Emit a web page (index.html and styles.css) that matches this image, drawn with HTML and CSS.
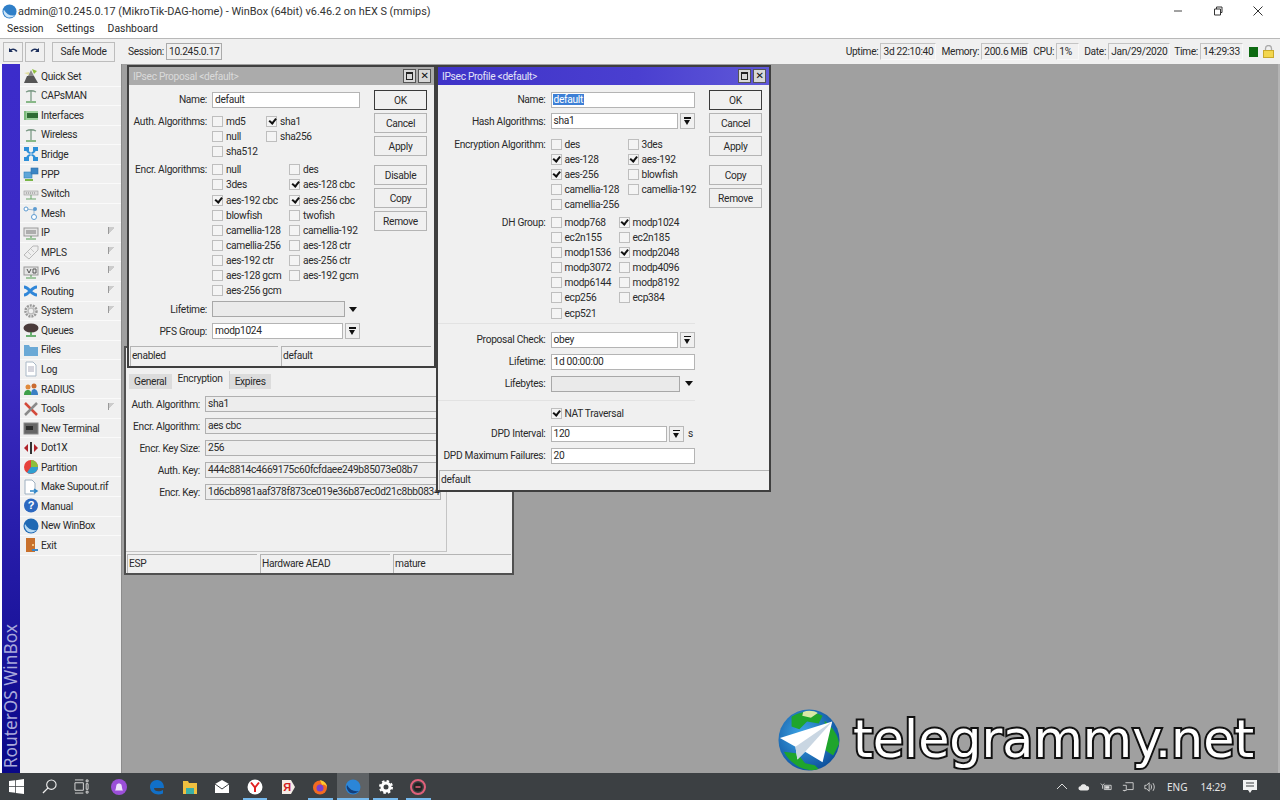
FILE: index.html
```html
<!DOCTYPE html>
<html>
<head>
    <title>WinBox</title>
    <link rel="stylesheet" href="styles.css">
</head>
<body>
<div class="app">

    <div class="titlebar">
        <svg class="app-icon" viewBox="0 0 16 16"><circle cx="8" cy="8" r="7.5" fill="#2f7fc8"/><path d="M2 6c3 5 7 7 12 6-3 3-8 3-10 1S1 8 2 6z" fill="#cfe6f8"/></svg>
        <span class="title-text">admin@10.245.0.17 (MikroTik-DAG-home) - WinBox (64bit) v6.46.2 on hEX S (mmips)</span>
        <div class="title-btns">
            <svg viewBox="0 0 10 10"><path d="M1 5h8" stroke="#444" fill="none"/></svg>
            <svg viewBox="0 0 10 10"><path d="M1.500 3h6v6h-6zM3.500 3V1h5.500v5.500H7.500" stroke="#333" fill="none"/></svg>
            <svg viewBox="0 0 10 10"><path d="M.5 .5l9 9M9.500 .5l-9 9" stroke="#333" fill="none"/></svg>
        </div>
    </div>

    <div class="menubar">
        <span>Session</span>
        <span>Settings</span>
        <span>Dashboard</span>
    </div>

    <div class="toolbar">
        <button class="tool-btn"><svg viewBox="0 0 12 12"><path d="M2 2v4h4L4.500 4.500C6 3.500 8 4 9 6L10.500 5C9 2.500 6 1.800 3.500 3.200z" fill="#1c2f5c"/></svg></button>
        <button class="tool-btn redo"><svg viewBox="0 0 12 12"><path d="M10 2v4H6l1.500-1.500C6 3.500 4 4 3 6L1.500 5C3 2.500 6 1.800 8.500 3.200z" fill="#1c2f5c"/></svg></button>
        <button class="tool-btn safe">Safe Mode</button>
        <span class="tool-label session">Session:</span>
        <span class="tool-field f-session">10.245.0.17</span>

        <div class="status-group">
            <span class="tool-label">Uptime:</span><span class="tool-field f-uptime">3d 22:10:40</span>
            <span class="tool-label">Memory:</span><span class="tool-field f-memory">200.6 MiB</span>
            <span class="tool-label">CPU:</span><span class="tool-field f-cpu">1%</span>
            <span class="tool-label">Date:</span><span class="tool-field f-date">Jan/29/2020</span>
            <span class="tool-label">Time:</span><span class="tool-field f-time">14:29:33</span>
            <span class="led"></span>
            <svg class="lock" viewBox="0 0 11 13"><path d="M2.500 6V3.500a3 3 0 0 1 6 0V6" fill="none" stroke="#aaa" stroke-width="1.300"/><rect x=".5" y="5.500" width="10" height="7" fill="#f3d64e" stroke="#c9a92c"/></svg>
        </div>
    </div>

    <div class="main">
        <div class="strip"><span>RouterOS WinBox</span></div>

        <ul class="menu">
            <li><svg viewBox="0 0 16 16"><path d="M1 15l3-7h7l4 7z" fill="#555"/><path d="M5 8l3-6 3 6z" fill="#8a8a8a"/><path d="M9 1l5 2-3 3z" fill="#8fbf3c"/><path d="M1 5l5-1v3z" fill="#e2dfa0"/></svg>Quick Set</li>
            <li><svg viewBox="0 0 16 16"><path d="M3 4c3-1.500 7-1.500 10 0M8 3v10" stroke="#7c9a86" stroke-width="1.300" fill="none"/><path d="M3 14h10" stroke="#4f9a4f" stroke-width="1.300"/></svg>CAPsMAN</li>
            <li><svg viewBox="0 0 16 16"><rect x="1" y="4" width="14" height="9" fill="#9ccf9c"/><rect x="4" y="6" width="11" height="5" fill="#2e6b34"/><path d="M2 4v9" stroke="#5aa55a"/></svg>Interfaces</li>
            <li><svg viewBox="0 0 16 16"><path d="M3 4c3-1.500 7-1.500 10 0M8 3v10" stroke="#7c9a86" stroke-width="1.300" fill="none"/><path d="M3 14h10" stroke="#4f9a4f" stroke-width="1.300"/></svg>Wireless</li>
            <li><svg viewBox="0 0 16 16"><path d="M1 1h5v4H1zM10 1h5v4h-5zM1 11h5v4H1zM10 11h5v4h-5z" fill="#2c8fd8"/><path d="M4 5l8 6M12 5l-8 6" stroke="#2c8fd8" stroke-width="2"/><path d="M6.500 8h3" stroke="#8fc0e8" stroke-width="2"/></svg>Bridge</li>
            <li><svg viewBox="0 0 16 16"><rect x="1" y="6" width="8" height="6" fill="#5da5d8" stroke="#2f7fb8" stroke-width=".6"/><rect x="8" y="2" width="7" height="6" fill="#3b85c4" stroke="#2f6fa8" stroke-width=".6"/><path d="M2 14h8" stroke="#7ab648" stroke-width="2"/></svg>PPP</li>
            <li><svg viewBox="0 0 16 16"><rect x="1" y="5" width="14" height="4" fill="#dcdcdc" stroke="#999" stroke-width=".6"/><path d="M3 7h10" stroke="#888" stroke-dasharray="1 1"/><path d="M8 9v4M3 13h10" stroke="#6aa56a"/></svg>Switch</li>
            <li><svg viewBox="0 0 16 16"><path d="M3 4l8 1v8" stroke="#9cb7cf" fill="none"/><circle cx="3" cy="4" r="2" fill="#fff" stroke="#5c9bd1"/><circle cx="12" cy="4" r="2" fill="#5c9bd1"/><circle cx="11" cy="12" r="2.500" fill="#fff" stroke="#5c9bd1"/></svg>Mesh</li>
            <li class="sub"><svg viewBox="0 0 16 16"><rect x="1" y="3" width="14" height="8" fill="#e4e4e4" stroke="#999"/><path d="M3 6h10M3 8h10" stroke="#777"/><path d="M8 11v2M3 14h10" stroke="#4f9a4f"/></svg>IP</li>
            <li class="sub"><svg viewBox="0 0 16 16"><path d="M1 11L10 2h5v4l-9 9z" fill="#efefef" stroke="#b8b8b8"/><path d="M5 8l3 3M8 5l3 3" stroke="#c8c8c8"/></svg>MPLS</li>
            <li class="sub"><svg viewBox="0 0 16 16"><rect x="1" y="3" width="14" height="8" fill="#e4e4e4" stroke="#999"/><path d="M4 5l2 4 2-4M10 5h3v4h-3z" stroke="#555" fill="none"/><path d="M8 11v2M3 14h10" stroke="#4f9a4f"/></svg>IPv6</li>
            <li class="sub"><svg viewBox="0 0 16 16"><path d="M1 4c5 0 7 8 13 8M1 12c5 0 7-8 13-8" stroke="#2f86d8" stroke-width="3" fill="none"/></svg>Routing</li>
            <li class="sub"><svg viewBox="0 0 16 16"><circle cx="8" cy="8" r="5.500" fill="none" stroke="#999" stroke-width="2.500" stroke-dasharray="2 1"/><circle cx="8" cy="8" r="3" fill="none" stroke="#bbb" stroke-width="1.500"/></svg>System</li>
            <li><svg viewBox="0 0 16 16"><ellipse cx="8" cy="6" rx="7.500" ry="4.500" fill="#4a3b3b"/><path d="M8 10v3M3 14h10" stroke="#3f9a4a" stroke-width="1.500"/></svg>Queues</li>
            <li><svg viewBox="0 0 16 16"><path d="M1 3h5l1 2h8v9H1z" fill="#6ba9d6"/></svg>Files</li>
            <li><svg viewBox="0 0 16 16"><path d="M3 1h7l3 3v11H3z" fill="#fff" stroke="#a9b8c6"/><path d="M5 6h6M5 8h6M5 10h6" stroke="#aab"/></svg>Log</li>
            <li><svg viewBox="0 0 16 16"><circle cx="5" cy="6" r="2.500" fill="#e08a3c"/><circle cx="11" cy="5" r="2.500" fill="#c96a30"/><path d="M1 14c0-4 2-5 4-5s3 1 4 5z" fill="#3fa04a"/><path d="M8 14c0-4 1-6 3-6s4 2 4 6z" fill="#3b80c4"/></svg>RADIUS</li>
            <li class="sub"><svg viewBox="0 0 16 16"><path d="M2 2l12 12" stroke="#d34a3a" stroke-width="2.500"/><path d="M14 2L2 14" stroke="#8a8a8a" stroke-width="2.500"/></svg>Tools</li>
            <li><svg viewBox="0 0 16 16"><rect x="1" y="3" width="14" height="11" fill="#666" stroke="#888"/><rect x="3" y="6" width="7" height="4" fill="#2c2c2c"/></svg>New Terminal</li>
            <li><svg viewBox="0 0 16 16"><path d="M1 8l4-4v8zM15 8l-4-4v8z" fill="#b0232a"/><path d="M8 2v12" stroke="#333" stroke-width="2"/></svg>Dot1X</li>
            <li><svg viewBox="0 0 16 16"><circle cx="8" cy="8" r="7" fill="#e6403a"/><path d="M8 8V1a7 7 0 0 1 7 7z" fill="#8cbf3c"/><path d="M8 8h7a7 7 0 0 1-11 5.500z" fill="#2f9fd0"/></svg>Partition</li>
            <li><svg viewBox="0 0 16 16"><path d="M2 1h7l3 3v11H2z" fill="#fff" stroke="#9fb0c0"/><path d="M7 12h6m-2-2l3 2-3 2" stroke="#2f86c8" stroke-width="1.500" fill="none"/></svg>Make Supout.rif</li>
            <li><svg viewBox="0 0 16 16"><circle cx="8" cy="7.500" r="7" fill="#2c68c0"/><text x="8" y="11" class="glyph">?</text></svg>Manual</li>
            <li><svg viewBox="0 0 16 16"><circle cx="8" cy="8" r="7.500" fill="#1f69b4"/><path d="M2 6c3 5 7 7 12 6-3 3-8 3-10 1S1 8 2 6z" fill="#b7d9f2"/></svg>New WinBox</li>
            <li><svg viewBox="0 0 16 16"><rect x="3" y="1" width="9" height="14" fill="#c8702c"/><circle cx="10" cy="8" r="1" fill="#ffe0a0"/><path d="M9 13h6" stroke="#3b86c8" stroke-width="2"/></svg>Exit</li>
        </ul>

        <div class="desktop">

            <div class="win win-sa">
                <div class="tabs">
                    <span class="tab">General</span>
                    <span class="tab active">Encryption</span>
                    <span class="tab">Expires</span>
                </div>
                <div class="sa-panel">
                    <div class="sa-row"><label>Auth. Algorithm:</label><span class="ro">sha1</span></div>
                    <div class="sa-row"><label>Encr. Algorithm:</label><span class="ro">aes cbc</span></div>
                    <div class="sa-row"><label>Encr. Key Size:</label><span class="ro">256</span></div>
                    <div class="sa-row"><label>Auth. Key:</label><span class="ro">444c8814c4669175c60fcfdaee249b85073e08b7</span></div>
                    <div class="sa-row"><label>Encr. Key:</label><span class="ro">1d6cb8981aaf378f873ce019e36b87ec0d21c8bb0834</span></div>
                </div>
                <div class="statusbar sa-status">
                    <span>ESP</span><span>Hardware AEAD</span><span>mature</span>
                </div>
            </div>

            <div class="win win-proposal">
                <div class="win-title inactive">
                    <span>IPsec Proposal &lt;default&gt;</span>
                    <i class="win-btn max"></i><i class="win-btn close"></i>
                </div>
                <div class="win-body">
                    <div class="form">
                        <div class="row"><label>Name:</label><span class="field">default</span></div>
                        <div class="checks auth">
                            <label>Auth. Algorithms:</label>
                            <div class="check-grid">
                                <span class="ck"><i></i>md5</span><span class="ck"><i class="on"></i>sha1</span>
                                <span class="ck"><i></i>null</span><span class="ck"><i></i>sha256</span>
                                <span class="ck"><i></i>sha512</span>
                            </div>
                        </div>
                        <div class="checks encr">
                            <label>Encr. Algorithms:</label>
                            <div class="check-grid">
                                <span class="ck"><i></i>null</span><span class="ck"><i></i>des</span>
                                <span class="ck"><i></i>3des</span><span class="ck"><i class="on"></i>aes-128 cbc</span>
                                <span class="ck"><i class="on"></i>aes-192 cbc</span><span class="ck"><i class="on"></i>aes-256 cbc</span>
                                <span class="ck"><i></i>blowfish</span><span class="ck"><i></i>twofish</span>
                                <span class="ck"><i></i>camellia-128</span><span class="ck"><i></i>camellia-192</span>
                                <span class="ck"><i></i>camellia-256</span><span class="ck"><i></i>aes-128 ctr</span>
                                <span class="ck"><i></i>aes-192 ctr</span><span class="ck"><i></i>aes-256 ctr</span>
                                <span class="ck"><i></i>aes-128 gcm</span><span class="ck"><i></i>aes-192 gcm</span>
                                <span class="ck"><i></i>aes-256 gcm</span>
                            </div>
                        </div>
                        <div class="row lifetime"><label>Lifetime:</label><span class="field empty"></span><b class="drop"></b></div>
                        <div class="row pfs"><label>PFS Group:</label><span class="field">modp1024</span><button class="arrow-btn"><em></em></button></div>
                    </div>
                    <div class="btns">
                        <button class="btn default">OK</button>
                        <button class="btn">Cancel</button>
                        <button class="btn">Apply</button>
                        <button class="btn gap">Disable</button>
                        <button class="btn">Copy</button>
                        <button class="btn">Remove</button>
                    </div>
                </div>
                <div class="statusbar">
                    <span>enabled</span><span>default</span>
                </div>
            </div>

            <div class="win win-profile">
                <div class="win-title">
                    <span>IPsec Profile &lt;default&gt;</span>
                    <i class="win-btn max"></i><i class="win-btn close"></i>
                </div>
                <div class="win-body">
                    <div class="form">
                        <div class="row"><label>Name:</label><span class="field"><mark>default</mark></span></div>
                        <div class="row hash"><label>Hash Algorithms:</label><span class="field">sha1</span><button class="arrow-btn"><em></em></button></div>
                        <div class="checks enc">
                            <label>Encryption Algorithm:</label>
                            <div class="check-grid">
                                <span class="ck"><i></i>des</span><span class="ck"><i></i>3des</span>
                                <span class="ck"><i class="on"></i>aes-128</span><span class="ck"><i class="on"></i>aes-192</span>
                                <span class="ck"><i class="on"></i>aes-256</span><span class="ck"><i></i>blowfish</span>
                                <span class="ck"><i></i>camellia-128</span><span class="ck"><i></i>camellia-192</span>
                                <span class="ck"><i></i>camellia-256</span>
                            </div>
                        </div>
                        <div class="checks dh">
                            <label>DH Group:</label>
                            <div class="check-grid">
                                <span class="ck"><i></i>modp768</span><span class="ck"><i class="on"></i>modp1024</span>
                                <span class="ck"><i></i>ec2n155</span><span class="ck"><i></i>ec2n185</span>
                                <span class="ck"><i></i>modp1536</span><span class="ck"><i class="on"></i>modp2048</span>
                                <span class="ck"><i></i>modp3072</span><span class="ck"><i></i>modp4096</span>
                                <span class="ck"><i></i>modp6144</span><span class="ck"><i></i>modp8192</span>
                                <span class="ck"><i></i>ecp256</span><span class="ck"><i></i>ecp384</span>
                                <span class="ck"><i></i>ecp521</span>
                            </div>
                        </div>
                        <hr class="sep sep1">
                        <div class="row"><label>Proposal Check:</label><span class="field">obey</span><button class="arrow-btn"><em></em></button></div>
                        <div class="row r6"><label>Lifetime:</label><span class="field">1d 00:00:00</span></div>
                        <div class="row r6 lifebytes"><label>Lifebytes:</label><span class="field empty"></span><b class="drop"></b></div>
                        <hr class="sep sep2">
                        <div class="row nat"><label></label><span class="ck"><i class="on"></i>NAT Traversal</span></div>
                        <div class="row dpd"><label>DPD Interval:</label><span class="field">120</span><button class="arrow-btn"><em></em></button><span class="unit">s</span></div>
                        <div class="row r6"><label>DPD Maximum Failures:</label><span class="field">20</span></div>
                    </div>
                    <div class="btns">
                        <button class="btn default">OK</button>
                        <button class="btn">Cancel</button>
                        <button class="btn">Apply</button>
                        <button class="btn gap">Copy</button>
                        <button class="btn">Remove</button>
                    </div>
                </div>
                <div class="statusbar">
                    <span>default</span>
                </div>
            </div>

            <div class="promo">
                <svg class="globe" viewBox="0 0 64 64">
                    <defs>
                        <radialGradient id="sea" cx="40%" cy="40%" r="65%"><stop offset="0" stop-color="#3fa8e8"/><stop offset="1" stop-color="#0d4f9c"/></radialGradient>
                    </defs>
                    <circle cx="32" cy="32" r="31.500" fill="url(#sea)"/>
                    <path d="M14 8c8-6 22-7 32-1l-4 8-12-2-8 8-8-3zM48 12c8 6 15 16 15 24l-6 12-9-6 2-14zM6 44l14 2 8 10 10 2 4 4c-12 4-28-3-36-18z" fill="#1fa52c"/>
                    <path d="M26 3c5-2 12-1 15 1l-7 5-9-2z" fill="#d8e8a8"/>
                    <path d="M2 30L56 13 46 55 28 44 20 52 18 39z" fill="#fff"/>
                    <path d="M18 39L56 13 28 44 20 52z" fill="#c9d6e2"/>
                </svg>
                <span class="promo-text">telegrammy.net</span>
            </div>
        </div>
    </div>

    <div class="taskbar">
        <div class="task"><svg viewBox="0 0 16 16"><path d="M0 2.200l6.500-.9V7.500H0zM7.300 1.200L16 0v7.500H7.300zM0 8.300h6.500v6.400L0 13.800zM7.300 8.300H16V16l-8.700-1.200z" fill="#fff"/></svg></div>
        <div class="task"><svg viewBox="0 0 16 16"><circle cx="10" cy="6" r="5" fill="none" stroke="#eee" stroke-width="1.200"/><path d="M6.500 9.500L1 15" stroke="#eee" stroke-width="1.400"/></svg></div>
        <div class="task"><svg viewBox="0 0 16 16"><path d="M1 1h9M1 15h9M1 4h9v8H1zM13 1h2v2h-2zM13 5h2v6h-2zM13 13h2v2h-2z" fill="none" stroke="#ddd"/></svg></div>
        <div class="task alice"><svg class="big" viewBox="0 0 16 16"><circle cx="8" cy="8" r="8" fill="#9b4fd8"/><path d="M4 11.500c1-1 1-4 1.500-5.500C6 4 10 4 10.500 6c.5 1.500.5 4.500 1.500 5.500z" fill="#efe3fb"/></svg></div>
        <div class="task"><svg class="big" viewBox="0 0 16 16"><path d="M1 8c0-4 3-7 7-7 5 0 7 4 7 8H5c0 4 6 4 9 2v3.500c-5 2-12 1-13-6z" fill="#1170c8"/></svg></div>
        <div class="task"><svg class="big" viewBox="0 0 16 16"><path d="M1 2h5l1 2h8v11H1z" fill="#f0c040"/><rect x="4" y="9" width="8" height="6" fill="#3bb0a8"/></svg></div>
        <div class="task"><svg class="big" viewBox="0 0 16 16"><path d="M1 5l7-4 7 4v9H1z" fill="#fff"/><path d="M1 5l7 5 7-5" fill="none" stroke="#3c4043"/></svg></div>
        <div class="task run"><svg class="big" viewBox="0 0 16 16"><circle cx="8" cy="8" r="7.500" fill="#fff"/><path d="M4 3.500l4 5 4-5M8 8v5" stroke="#e02020" stroke-width="2" fill="none"/></svg></div>
        <div class="task"><svg class="big" viewBox="0 0 16 16"><path d="M2 1h9l4 7-4 7H2z" fill="#f4ece6"/><text x="7" y="12" class="glyph ya">Я</text></svg></div>
        <div class="task run"><svg class="big" viewBox="0 0 16 16"><circle cx="8" cy="8.500" r="7" fill="#f26b21"/><path d="M8 1c4 1 7 4 7 7-2-3-4-3-5-2z" fill="#ffcb2e"/><circle cx="8" cy="9" r="3.500" fill="#7a3fd0"/></svg></div>
        <div class="task run active"><svg class="big" viewBox="0 0 16 16"><circle cx="8" cy="8" r="7.500" fill="#2b86d8"/><path d="M2 6c3 5 7 7 12 6-3 3-8 3-10 1S1 8 2 6z" fill="#123f7c"/></svg></div>
        <div class="task run"><svg class="big" viewBox="0 0 16 16"><circle cx="8" cy="8" r="4" fill="none" stroke="#fff" stroke-width="3"/><circle cx="8" cy="8" r="6" fill="none" stroke="#fff" stroke-width="2" stroke-dasharray="2.500 2.200"/></svg></div>
        <div class="task run"><svg class="big" viewBox="0 0 16 16"><circle cx="8" cy="8" r="7" fill="none" stroke="#e0607a" stroke-width="2"/><circle cx="8" cy="8" r="4.500" fill="#222"/><path d="M5.500 8h5" stroke="#e0607a" stroke-width="1.500"/></svg></div>

        <div class="tray">
            <svg viewBox="0 0 12 12"><path d="M1 8l5-5 5 5" fill="none" stroke="#ddd"/></svg>
            <svg viewBox="0 0 14 12"><path d="M3 10a2.500 2.500 0 0 1 0-5c1-3 6-3 7 0a2.500 2.500 0 0 1 1 5z" fill="#e8e8e8"/></svg>
            <svg viewBox="0 0 14 12"><path d="M1 2l2 2 2-2M3 4v4M5 4h8v5H5z" fill="none" stroke="#ddd"/><rect x="6" y="5" width="5" height="3" fill="#ddd"/></svg>
            <svg viewBox="0 0 14 12"><path d="M4 1h9v8H6M1 4h4v6H1M3 10v1" fill="none" stroke="#ddd"/></svg>
            <svg viewBox="0 0 14 12"><path d="M1 4h2l3-3v10L3 8H1zM8 3c1 2 1 4 0 6M10.500 1.500c2 3 2 6 0 9" fill="none" stroke="#ddd"/></svg>
            <span class="lang">ENG</span>
            <span class="clock">14:29</span>
            <svg class="note" viewBox="0 0 14 14"><path d="M0 0h14v10H9l-2 3-2-3H0z" fill="#f2f2f2"/><path d="M3 3h8M3 6h8" stroke="#3c4043"/></svg>
        </div>
    </div>

</div>
</body>
</html>
```

FILE: styles.css
```css
html, body {
    margin: 0;
    height: 100%;
    overflow: hidden;
}
body {
    background: #FFF;
    color: #2a2a2a;
    font: 10.2px/15px "Roboto", "Liberation Sans", sans-serif;
    letter-spacing: -.3px;
}
label { white-space: nowrap; }
.app {
    display: flex;
    flex-direction: column;
    width: 1280px;
    height: 800px;
}

/* top of the frame */
.titlebar {
    display: flex;
    align-items: center;
    height: 22px;
    padding-left: 2px;
}
.app-icon { width: 15px; height: 15px; margin-right: 1px; }
.title-text { font: 10.9px "Roboto", sans-serif; letter-spacing: 0; color: #333; }
.title-btns {
    display: flex;
    margin-left: auto;
    gap: 30px;
    padding-right: 17px;
}
.title-btns svg { width: 10px; height: 10px; }
.menubar {
    display: flex;
    gap: 13px;
    height: 16px;
    padding-left: 7px;
    font: 10.4px/14px "Roboto", sans-serif;
    letter-spacing: 0;
}
.toolbar {
    display: flex;
    align-items: center;
    height: 25px;
    padding-left: 3px;
    background: #F0F0F0;
    border-top: 1px solid #B8B8B8;
}
.tool-btn {
    width: 20px;
    height: 20px;
    padding: 0;
    background: #F0F0F0;
    border: 1px solid #BDBDBD;
    font: inherit;
    letter-spacing: inherit;
    color: inherit;
}
.tool-btn svg { width: 12px; height: 12px; display: block; margin: auto; }
.tool-btn.redo { margin-left: 2px; }
.tool-btn.safe { width: 63px; margin-left: 7px; }
.tool-label { margin-right: 2px; }
.tool-label.session { margin-left: 13px; }
.tool-field {
    height: 15px;
    padding-left: 2px;
    border: 1px solid #C4C4C4;
    border-right-color: #F8F8F8;
    border-bottom-color: #F8F8F8;
    box-sizing: content-box;
    white-space: nowrap;
}
.f-session { width: 52px; border-color: #ABABAB; }
.status-group {
    display: flex;
    align-items: center;
    margin-left: auto;
    padding-right: 6px;
}
.f-uptime { width: 52px; margin-right: 5px; }
.f-memory { width: 44px; margin-right: 4px; }
.f-cpu { width: 19px; margin-right: 5px; }
.f-date { width: 58px; margin-right: 4px; }
.f-time { width: 39px; margin-right: 6px; }
.led {
    width: 9px;
    height: 10px;
    background: #0E6A12;
    margin-right: 5px;
}
.lock { width: 11px; height: 13px; }

/* sidebar */
.main {
    flex: 1;
    display: flex;
    min-height: 0;
}
.strip {
    display: flex;
    align-items: flex-end;
    justify-content: center;
    width: 18px;
    margin-left: 2px;
    background: linear-gradient(#3C2CCB, #3A2AC0 45%, #0A0888);
}
.strip span {
    writing-mode: vertical-rl;
    transform: rotate(180deg);
    color: #A9A9DC;
    font: 17.3px/18px "Noto Sans", sans-serif;
    letter-spacing: 0;
    padding-top: 5px;
}
.menu {
    display: grid;
    grid-auto-rows: 19.55px;
    align-content: start;
    width: 101px;
    margin: 0;
    padding: 3px 0 0;
    list-style: none;
    background: #F0F0F0;
    border-right: 1px solid #8C8C8C;
}
.menu li {
    position: relative;
    display: flex;
    align-items: center;
    padding-left: 3px;
    border-bottom: 1px solid #FAFAFA;
}
.menu svg { width: 16px; height: 16px; margin-right: 2px; flex: none; }
.menu .sub::after {
    content: '';
    position: absolute;
    right: 7px;
    top: 4px;
    width: 5px;
    height: 7px;
    border-left: 1px solid #999;
    background: linear-gradient(135deg, #CCC 50%, transparent 50%);
}
.glyph {
    font: bold 11px "Liberation Sans", sans-serif;
    fill: #FFF;
    text-anchor: middle;
}
.glyph.ya { fill: #D02020; }

/* windows */
.desktop {
    position: relative;
    flex: 1;
    background: #A0A0A0;
    border-right: 2px solid #B4B4B4;
}
.win {
    position: absolute;
    display: flex;
    flex-direction: column;
    box-sizing: border-box;
    background: #F0F0F0;
    border: 2px solid #3F3F3F;
}
.win-sa { left: 2px; top: 282px; width: 390px; height: 229px; border-color: #505050; }
.win-proposal { left: 5px; top: 1px; width: 309px; height: 303px; }
.win-profile { left: 314px; top: 1px; width: 335px; height: 427px; }

.win-title {
    display: flex;
    align-items: center;
    flex: none;
    height: 18px;
    padding: 0 3px 0 4px;
    background: linear-gradient(90deg, #3F33C8, #4A3FD0 60%, #5F58D8);
    color: #E4E4F8;
}
.win-title span { flex: 1; }
.win-title.inactive { background: #ABABAB; color: #DADADA; }
.win-btn {
    box-sizing: border-box;
    position: relative;
    width: 13px;
    height: 14px;
    margin-left: 2px;
    background: #D8D8D8;
    border: 1px solid #555;
}
.win-btn.max::after {
    content: '';
    position: absolute;
    left: 2px; top: 2px; right: 2px; bottom: 2px;
    border: 1px solid #222;
    border-top-width: 2px;
}
.win-btn.close::after {
    content: '\2715';
    position: absolute;
    left: 0; right: 0; top: 0;
    font: bold 10px/12px "DejaVu Sans", sans-serif;
    text-align: center;
    color: #111;
}
.win-body { flex: 1; display: flex; min-height: 0; }

.form { flex: none; }
.row {
    display: flex;
    align-items: center;
    height: 16px;
}
.form label, .checks > label {
    flex: none;
    text-align: right;
    margin-right: 5px;
}
.field {
    flex: 1;
    box-sizing: border-box;
    height: 16px;
    padding-left: 2px;
    background: #FFF;
    border: 1px solid #B4B4B4;
    line-height: 14px;
    white-space: nowrap;
}
.field.empty { background: #EAEAEA; border-color: #A8A8A8; }
mark { background: #3D7FD6; color: #FFF; padding: 0 1px; margin-left: -1px; }
.arrow-btn {
    flex: none;
    box-sizing: border-box;
    width: 15px;
    height: 16px;
    margin-left: 2px;
    padding: 0;
    background: #F0F0F0;
    border: 1px solid #B8B8B8;
    position: relative;
}
.arrow-btn em {
    position: absolute;
    left: 3px;
    top: 6px;
    border: 3.5px solid transparent;
    border-top: 5px solid #111;
    border-bottom: 0;
}
.arrow-btn em::before {
    content: '';
    position: absolute;
    left: -3.5px;
    top: -8px;
    width: 7px;
    height: 1.5px;
    background: #111;
}
.drop {
    flex: none;
    margin-left: 5px;
    margin-right: 2px;
    border: 4.5px solid transparent;
    border-top: 5px solid #111;
    border-bottom: 0;
}
.checks { display: flex; }
.check-grid {
    display: grid;
    grid-auto-rows: 15.1px;
}
.ck {
    display: flex;
    align-items: center;
    white-space: nowrap;
}
.ck i {
    position: relative;
    flex: none;
    box-sizing: border-box;
    width: 11px;
    height: 11px;
    margin-right: 3px;
    background: #F4F4F4;
    border: 1px solid #BEBEBE;
}
.ck i.on::after {
    content: '';
    position: absolute;
    left: 1.5px;
    top: 1px;
    width: 5px;
    height: 2.5px;
    border-left: 2px solid #111;
    border-bottom: 2px solid #111;
    transform: rotate(-50deg);
}
.btns {
    display: flex;
    flex-direction: column;
    gap: 3px;
    width: 53px;
}
.btn {
    box-sizing: border-box;
    height: 20px;
    padding: 0;
    background: #F0F0F0;
    border: 1px solid #B4B4B4;
    font: inherit;
    letter-spacing: inherit;
    color: inherit;
}
.btn.default { border: 1.5px solid #3A3A3A; }
.btn.gap { margin-top: 6px; }
.statusbar {
    display: flex;
    flex: none;
    gap: 3px;
    height: 20px;
    padding-left: 1px;
}
.statusbar span {
    box-sizing: border-box;
    flex: 1;
    padding: 1px 0 0 1px;
    border-top: 1px solid #B4B4B4;
    border-left: 1px solid #B4B4B4;
}

/* proposal window */
.win-proposal .win-body { padding: 5px 7px 0 0; gap: 14px; }
.win-proposal .form { width: 231px; padding-top: 1.500px; }
.win-proposal label { width: 78px; }
.auth { margin-top: 6px; }
.auth .check-grid { grid-template-columns: 54px 80px; }
.encr { margin-top: 3.500px; }
.encr .check-grid { grid-template-columns: 77px 70px; }
.lifetime { margin-top: 3px; padding-right: 0; }
.lifetime .drop { margin-left: 4px; margin-right: 3px; }
.pfs { margin-top: 6px; }
.win-proposal .statusbar span:first-child { flex: none; width: 148px; }
.win-proposal .statusbar { padding-right: 3px; }

/* profile window */
.win-profile .win-body { padding: 5px 7px 0 0; gap: 14px; }
.win-profile .form { width: 257px; padding-top: 1.500px; }
.win-profile label { width: 107.500px; }
.hash { margin-top: 5.500px; }
.enc { margin-top: 8px; }
.enc .check-grid { grid-template-columns: 77px 70px; }
.dh { margin-top: 2.500px; }
.dh .check-grid { grid-template-columns: 68px 70px; }
.sep {
    margin: 0;
    border: 0;
    border-top: 1px solid #E2E2E2;
}
.sep1 { margin: 2px 0 8px; }
.r6 { margin-top: 6px; }
.lifebytes .drop { margin-left: 5px; margin-right: 2px; }
.sep2 { margin: 8px 0 5px; }
.nat { height: 15px; }
.nat i { width: 11px; }
.dpd { margin-top: 5px; }
.dpd .unit { flex: none; width: 11px; padding-left: 4px; box-sizing: border-box; }

/* security association window behind */
.win-sa .tabs {
    display: flex;
    align-items: flex-end;
    height: 20px;
    margin-top: 21px;
    padding-left: 3px;
}
.tab {
    padding: 0 5px;
    height: 15px;
    background: #DCDCDC;
}
.tab.active {
    height: 18px;
    padding: 0 6px;
    background: #F0F0F0;
    border-right: 1px solid #D0D0D0;
}
.sa-panel {
    flex: 1;
    width: 320px;
    padding-top: 7px;
    border-right: 1px solid #C4C4C4;
    border-bottom: 1px solid #C4C4C4;
}
.sa-row {
    display: flex;
    align-items: center;
    height: 16px;
    margin-bottom: 6px;
}
.sa-row label {
    flex: none;
    width: 74px;
    margin-right: 5px;
    text-align: right;
}
.ro {
    flex: none;
    box-sizing: border-box;
    width: 236px;
    height: 16px;
    padding-left: 2px;
    background: #EDEDED;
    border: 1px solid #B0B0B0;
    line-height: 14px;
    white-space: nowrap;
}
.sa-status { height: 19px; margin-top: 2px; }
.win-sa .statusbar span { flex: none; width: 130px; }
.win-sa .statusbar span:last-child { width: 118px; }

/* overlay logo */
.promo {
    position: absolute;
    left: 656px;
    top: 645px;
    display: flex;
    align-items: center;
    gap: 13px;
}
.globe { width: 62px; height: 62px; flex: none; }
.promo-text {
    font: 50.700px/62px "DejaVu Sans", sans-serif;
    letter-spacing: 0;
    color: #FFF;
    -webkit-text-stroke: 4px #111;
    paint-order: stroke fill;
    white-space: nowrap;
}

/* windows taskbar */
.taskbar {
    display: flex;
    align-items: center;
    height: 27px;
    background: #3C4043;
    color: #E6E6E6;
}
.task {
    display: flex;
    align-items: center;
    justify-content: center;
    flex: none;
    position: relative;
    width: 32.700px;
    height: 27px;
}
.task svg { width: 15px; height: 15px; }
.task svg.big { width: 16px; height: 16px; }
.task.alice { margin-left: 4.500px; margin-right: 5.300px; }
.task.active { background: #5E6265; }
.task.run::after {
    content: '';
    position: absolute;
    left: 4px; right: 4px; bottom: 0;
    height: 2px;
    background: #76B9ED;
}
.task.active::after { left: 0; right: 0; }
.tray {
    display: flex;
    align-items: center;
    margin-left: auto;
    gap: 10px;
    padding-right: 23px;
    font: 10px "Noto Sans", sans-serif;
    letter-spacing: 0;
}
.tray svg { width: 12px; height: 12px; }
.tray .lang { margin-left: 1px; }
.tray .clock { margin-left: 3px; }
.tray .note { width: 14px; height: 14px; margin-left: 7px; }
```
